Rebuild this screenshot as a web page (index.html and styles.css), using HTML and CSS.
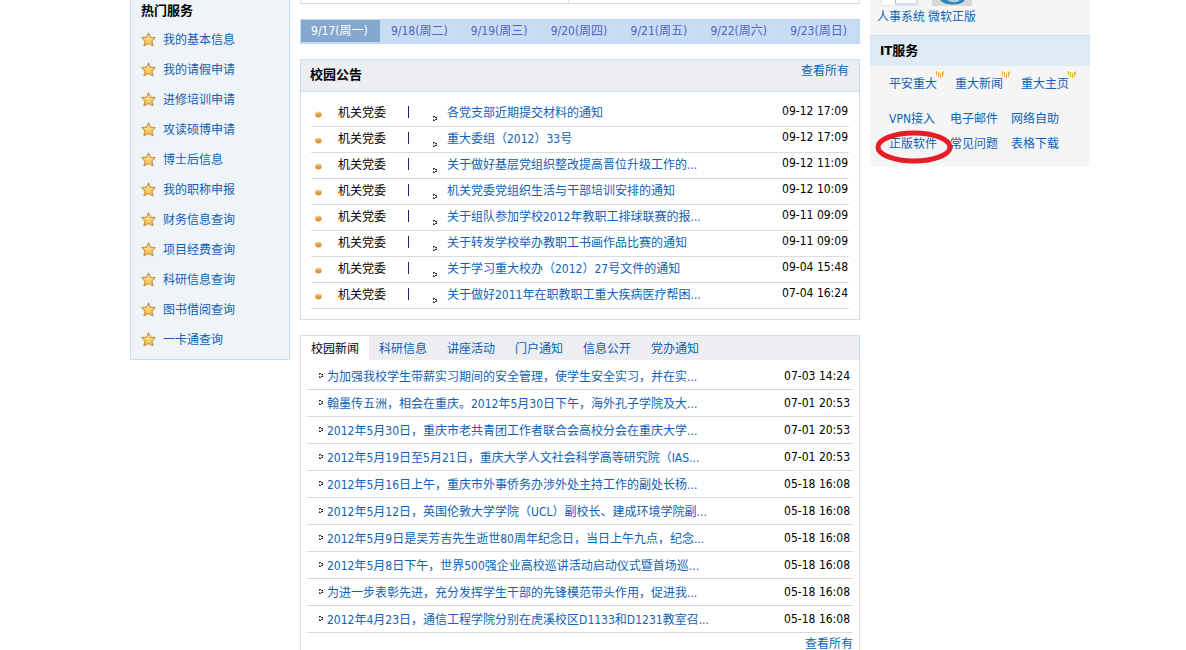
FILE: index.html
```html
<!DOCTYPE html>
<html lang="zh-CN">
<head>
<meta charset="utf-8">
<title>校园门户</title>
<link rel="stylesheet" href="styles.css">
</head>
<body>
<svg class="defs" width="0" height="0" aria-hidden="true">
  <defs>
    <linearGradient id="gold" x1="0" y1="0" x2="0" y2="1"><stop offset="0" stop-color="#fff0ae"/><stop offset="1" stop-color="#f8b935"/></linearGradient>
    <linearGradient id="amber" x1="0" y1="0" x2="0" y2="1"><stop offset="0" stop-color="#f6d79c"/><stop offset=".5" stop-color="#e6a044"/><stop offset="1" stop-color="#d8872c"/></linearGradient>
    <symbol id="star" viewBox="0 0 15 15"><path d="M7.5 1 L9.5 5.2 L14.2 5.6 L10.9 8.9 L12 13.7 L7.5 11.5 L3 13.7 L4.1 8.9 L.8 5.6 L5.5 5.2Z" fill="url(#gold)" stroke="#c99755" stroke-width="1.2" stroke-linejoin="round"/></symbol>
    <symbol id="dot" viewBox="0 0 7 7"><ellipse cx="3.5" cy="3.5" rx="3.3" ry="3" fill="url(#amber)"/></symbol>
    <symbol id="arrow" viewBox="0 0 4 5"><path d="M0 0h2v1H0zM2 1h2v1H2zM2 3h2v1H2zM0 4h2v1H0z" fill="#333"/><path d="M0 1h1v1H0zM3 2h1v1H3zM0 3h1v1H0z" fill="#777"/></symbol>
    <symbol id="signal" viewBox="0 0 8 8"><path d="M0 0h1v4H0zM2 1h1v5H2zM4 2h1v5H4zM6 1h1v5H6z" fill="#e5ad3c"/><path d="M7 0h1v4H7z" fill="#edc873"/></symbol>
  </defs>
</svg>
<div class="page">
  <nav class="sidebar">
    <h2 class="title">热门服务</h2>
    <ul class="services">
      <li><svg class="star"><use href="#star"/></svg><a href="#">我的基本信息</a></li>
      <li><svg class="star"><use href="#star"/></svg><a href="#">我的请假申请</a></li>
      <li><svg class="star"><use href="#star"/></svg><a href="#">进修培训申请</a></li>
      <li><svg class="star"><use href="#star"/></svg><a href="#">攻读硕博申请</a></li>
      <li><svg class="star"><use href="#star"/></svg><a href="#">博士后信息</a></li>
      <li><svg class="star"><use href="#star"/></svg><a href="#">我的职称申报</a></li>
      <li><svg class="star"><use href="#star"/></svg><a href="#">财务信息查询</a></li>
      <li><svg class="star"><use href="#star"/></svg><a href="#">项目经费查询</a></li>
      <li><svg class="star"><use href="#star"/></svg><a href="#">科研信息查询</a></li>
      <li><svg class="star"><use href="#star"/></svg><a href="#">图书借阅查询</a></li>
      <li><svg class="star"><use href="#star"/></svg><a href="#">一卡通查询</a></li>
    </ul>
  </nav>

  <main class="main">
    <div class="split"><div></div><div></div></div>
    <nav class="days">
      <a class="current" href="#">9/17(周一)</a>
      <a href="#">9/18(周二)</a>
      <a href="#">9/19(周三)</a>
      <a href="#">9/20(周四)</a>
      <a href="#">9/21(周五)</a>
      <a href="#">9/22(周六)</a>
      <a href="#">9/23(周日)</a>
    </nav>

    <section class="notices">
      <header class="notices-head"><h2 class="title">校园公告</h2><a href="#">查看所有</a></header>
      <ul class="notice-list">
        <li><svg class="dot"><use href="#dot"/></svg><span class="dept">机关党委</span><i class="bar"></i><svg class="arrow"><use href="#arrow"/></svg><a href="#">各党支部近期提交材料的通知</a><time>09-12 17:09</time></li>
        <li><svg class="dot"><use href="#dot"/></svg><span class="dept">机关党委</span><i class="bar"></i><svg class="arrow"><use href="#arrow"/></svg><a href="#">重大委组（2012）33号</a><time>09-12 17:09</time></li>
        <li><svg class="dot"><use href="#dot"/></svg><span class="dept">机关党委</span><i class="bar"></i><svg class="arrow"><use href="#arrow"/></svg><a href="#">关于做好基层党组织整改提高晋位升级工作的...</a><time>09-12 11:09</time></li>
        <li><svg class="dot"><use href="#dot"/></svg><span class="dept">机关党委</span><i class="bar"></i><svg class="arrow"><use href="#arrow"/></svg><a href="#">机关党委党组织生活与干部培训安排的通知</a><time>09-12 10:09</time></li>
        <li><svg class="dot"><use href="#dot"/></svg><span class="dept">机关党委</span><i class="bar"></i><svg class="arrow"><use href="#arrow"/></svg><a href="#">关于组队参加学校2012年教职工排球联赛的报...</a><time>09-11 09:09</time></li>
        <li><svg class="dot"><use href="#dot"/></svg><span class="dept">机关党委</span><i class="bar"></i><svg class="arrow"><use href="#arrow"/></svg><a href="#">关于转发学校举办教职工书画作品比赛的通知</a><time>09-11 09:09</time></li>
        <li><svg class="dot"><use href="#dot"/></svg><span class="dept">机关党委</span><i class="bar"></i><svg class="arrow"><use href="#arrow"/></svg><a href="#">关于学习重大校办（2012）27号文件的通知</a><time>09-04 15:48</time></li>
        <li><svg class="dot"><use href="#dot"/></svg><span class="dept">机关党委</span><i class="bar"></i><svg class="arrow"><use href="#arrow"/></svg><a href="#">关于做好2011年在职教职工重大疾病医疗帮困...</a><time>07-04 16:24</time></li>
      </ul>
    </section>

    <section class="news">
      <nav class="tabs">
        <a class="current" href="#">校园新闻</a>
        <a href="#">科研信息</a>
        <a href="#">讲座活动</a>
        <a href="#">门户通知</a>
        <a href="#">信息公开</a>
        <a href="#">党办通知</a>
      </nav>
      <ul class="news-list">
        <li><svg class="arrow"><use href="#arrow"/></svg><a href="#">为加强我校学生带薪实习期间的安全管理，使学生安全实习，并在实...</a><time>07-03 14:24</time></li>
        <li><svg class="arrow"><use href="#arrow"/></svg><a href="#">翰墨传五洲，相会在重庆。2012年5月30日下午，海外孔子学院及大...</a><time>07-01 20:53</time></li>
        <li><svg class="arrow"><use href="#arrow"/></svg><a href="#">2012年5月30日，重庆市老共青团工作者联合会高校分会在重庆大学...</a><time>07-01 20:53</time></li>
        <li><svg class="arrow"><use href="#arrow"/></svg><a href="#">2012年5月19日至5月21日，重庆大学人文社会科学高等研究院（IAS...</a><time>07-01 20:53</time></li>
        <li><svg class="arrow"><use href="#arrow"/></svg><a href="#">2012年5月16日上午，重庆市外事侨务办涉外处主持工作的副处长杨...</a><time>05-18 16:08</time></li>
        <li><svg class="arrow"><use href="#arrow"/></svg><a href="#">2012年5月12日，英国伦敦大学学院（UCL）副校长、建成环境学院副...</a><time>05-18 16:08</time></li>
        <li><svg class="arrow"><use href="#arrow"/></svg><a href="#">2012年5月9日是吴芳吉先生逝世80周年纪念日，当日上午九点，纪念...</a><time>05-18 16:08</time></li>
        <li><svg class="arrow"><use href="#arrow"/></svg><a href="#">2012年5月8日下午，世界500强企业高校巡讲活动启动仪式暨首场巡...</a><time>05-18 16:08</time></li>
        <li><svg class="arrow"><use href="#arrow"/></svg><a href="#">为进一步表彰先进，充分发挥学生干部的先锋模范带头作用，促进我...</a><time>05-18 16:08</time></li>
        <li><svg class="arrow"><use href="#arrow"/></svg><a href="#">2012年4月23日，通信工程学院分别在虎溪校区D1133和D1231教室召...</a><time>05-18 16:08</time></li>
      </ul>
      <a class="more" href="#">查看所有</a>
    </section>
  </main>

  <aside class="aside">
    <div class="apps">
      <a href="#"><svg class="app-icon" viewBox="0 0 40 7"><path d="M.5 0V5.500H38V0" fill="#fff" stroke="#dfe5ee"/><path d="M14.500 0V4H36V0" fill="#fdfdff" stroke="#a9bfe0"/></svg>人事系统</a>
      <a href="#"><svg class="app-icon" viewBox="0 0 40 7"><path d="M0 0h40v6H0z" fill="#d6d9d6"/><path d="M8 0Q12 4.500 21 4.500Q30 4.500 33 0Z" fill="#2f83b8"/><path d="M15 0Q19 3 25 2L28 0Z" fill="#a5d4ec"/></svg>微软正版</a>
    </div>
    <h2 class="title it-title">IT服务</h2>
    <div class="hot-links">
      <a href="#">平安重大<svg class="signal"><use href="#signal"/></svg></a>
      <a href="#">重大新闻<svg class="signal"><use href="#signal"/></svg></a>
      <a href="#">重大主页<svg class="signal"><use href="#signal"/></svg></a>
    </div>
    <div class="it-links">
      <a href="#">VPN接入</a><a href="#">电子邮件</a><a href="#">网络自助</a>
      <a class="marked" href="#">正版软件<svg class="ring" viewBox="0 0 78 34"><ellipse cx="39" cy="17" rx="36" ry="14" fill="none" stroke="#e81c24" stroke-width="5"/></svg></a><a href="#">常见问题</a><a href="#">表格下载</a>
    </div>
  </aside>
</div>
</body>
</html>
```
FILE: styles.css
```css
* { box-sizing: border-box; }
body {
  margin: 0;
  background: #fff;
  color: #000;
  font: 12px/16px "DejaVu Sans Condensed", "Noto Sans CJK SC", sans-serif;
}
a { color: #0f62b5; text-decoration: none; white-space: nowrap; }
ul { list-style: none; margin: 0; padding: 0; }
svg { flex: none; display: block; }
.defs { position: absolute; }
.title { margin: 0; font-size: 13px; line-height: 16px; font-weight: bold; }
time { margin-left: auto; white-space: nowrap; }

.page {
  display: flex;
  align-items: flex-start;
  gap: 10px;
  padding: 0 96px 0 130px;
}

.sidebar {
  flex: 0 0 160px;
  background: #eef4f8;
  border: 1px solid #c8deed;
  border-top: 0;
  padding: 3px 10px 5px;
}
.services { padding-top: 5px; }
.services li { display: flex; align-items: center; gap: 7px; height: 30px; }
.services a { padding-top: 2px; }
.star { width: 15px; height: 15px; }

.main { flex: 1; min-width: 0; }
.split {
  display: grid;
  grid-template-columns: 267px 1fr;
  height: 4px;
  border: 1px solid #cfdfe8;
  border-top: 0;
}
.split div + div { border-left: 1px solid #cfdfe8; }

.days {
  display: grid;
  grid-template-columns: repeat(7, 1fr);
  margin-top: 15px;
  padding: 1px 0 2px 1px;
  background: #c1d8fa;
}
.days a {
  color: #5563c6;
  text-align: center;
  line-height: 22px;
  padding-right: 2px;
  background: #c7ddf3;
  border-right: 1px solid #c3d9f8;
}
.days .current { background: #84a8cf; color: #fff; }

.notices { margin-top: 15px; border: 1px solid #cfdfe8; padding-bottom: 10px; }
.notices-head {
  display: flex;
  justify-content: space-between;
  padding: 3px 10px 4px 9px;
  height: 32px;
  background: #edeef2;
  border-bottom: 1px solid #cfdfe8;
}
.notices-head .title { line-height: 24px; }
.notice-list { padding: 9px 10px 0; }
.notice-list li {
  display: flex;
  align-items: center;
  height: 26px;
  padding: 0 1px 2px 4px;
  border-bottom: 1px solid #d8dcdf;
}
.dot { width: 7px; height: 7px; margin-top: 3px; }
.dept { width: 70px; margin-left: 16px; }
.bar { width: 1px; height: 12px; background: #25206b; margin-bottom: 2px; }
.arrow { width: 4px; height: 5px; }
.notice-list .arrow { margin: 12px 10px 0 24px; }
.notice-list a { padding-top: 1px; }
.notice-list time { padding-bottom: 3px; }

.news { margin-top: 15px; border: 1px solid #cfdfe8; border-bottom: 0; }
.tabs { display: flex; background: #edeef2; }
.tabs a { width: 68px; height: 24px; text-align: center; line-height: 26px; }
.tabs .current { background: #fff; color: #000; }
.news-list { padding: 3px 6px 0; }
.news-list li {
  display: flex;
  align-items: center;
  height: 27px;
  padding: 0 3px 0 12px;
  border-bottom: 1px solid #d8dcdf;
}
.news-list a { padding-top: 1px; }
.news-list .arrow { margin: 0 4px 2px 0; }
.more { display: block; text-align: right; padding: 4px 6px 0; line-height: 14px; }

.aside { flex: 0 0 220px; background: #f5f5f5; padding-bottom: 9px; }
.apps { display: flex; gap: 3px; padding: 0 7px 8px; }
.apps a { line-height: 20px; }
.app-icon { width: 40px; height: 7px; margin: 0 4px; }
.it-title { background: #dfebf4; border-top: 1px solid #c8dbe8; padding: 7px 10px; }
.hot-links { display: flex; gap: 18px; padding: 10px 19px 0; }
.hot-links a { position: relative; }
.signal { position: absolute; left: 47px; top: -5px; width: 8px; height: 8px; }
.it-links {
  display: grid;
  grid-template-columns: repeat(3, 61px);
  padding: 15px 0 0 19px;
  line-height: 25px;
}
.marked { position: relative; }
.ring { position: absolute; left: -14px; top: -2px; width: 78px; height: 34px; pointer-events: none; }
```
